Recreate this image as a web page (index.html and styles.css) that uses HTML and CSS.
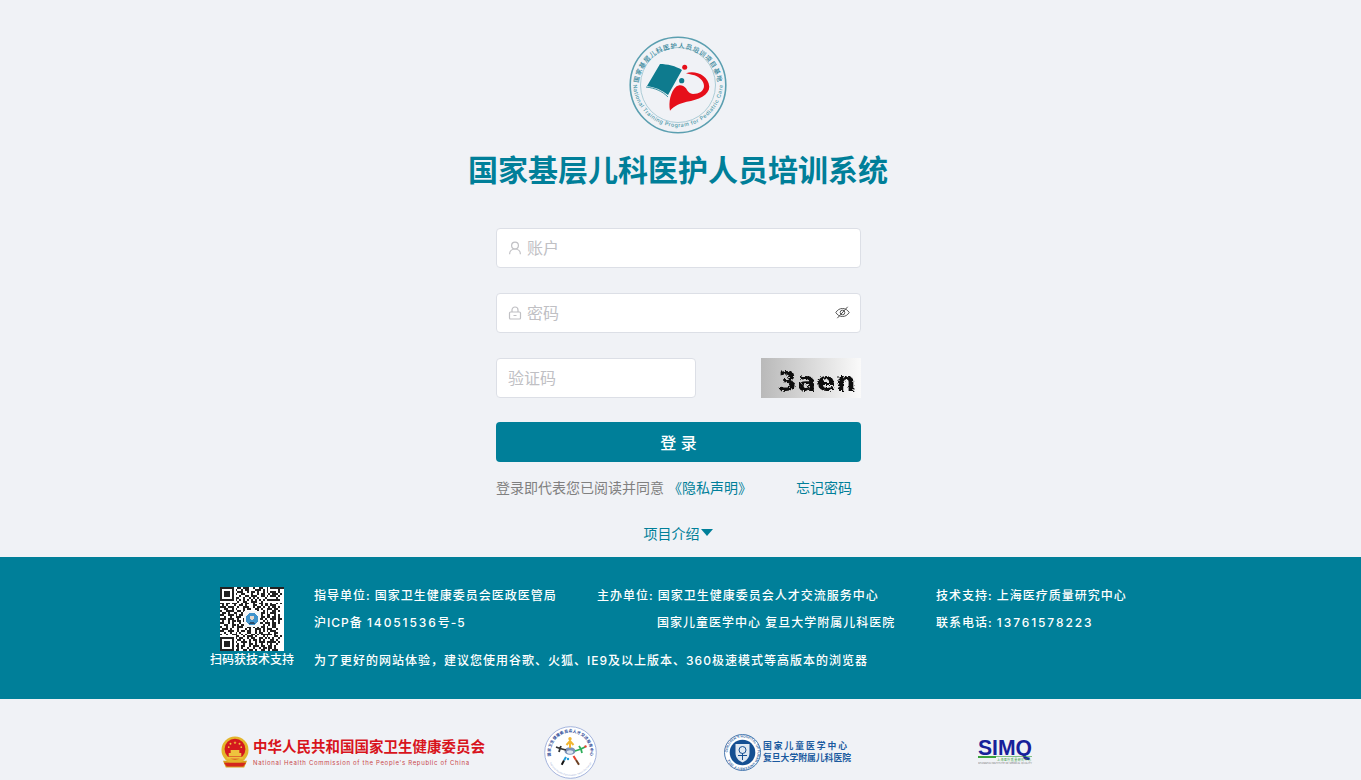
FILE: index.html
```html
<!DOCTYPE html>
<html lang="zh">

<head>
    <meta charset="utf-8">
    <title>国家基层儿科医护人员培训系统</title>
    <link rel="stylesheet" href="styles.css">
</head>

<body>
    <div class="main">
        <svg class="logo" width="98" height="98" viewBox="0 0 98 98">
            <defs>
                <path id="ring-top" d="M9 52A40 40 0 0 1 89 52"></path>
                <path id="ring-bottom" d="M4 46A45 45 0 0 0 94 46"></path>
            </defs>
            <circle cx="49" cy="49" r="47.8" fill="none" stroke="#5b9fb0" stroke-width="1.6"></circle>
            <circle cx="49" cy="49" r="37.5" fill="none" stroke="#8fbcc8" stroke-width="0.7"></circle>
            <text class="ring-cn"><textPath href="#ring-top" startOffset="50%" text-anchor="middle">国家基层儿科医护人员培训项目基地</textPath></text>
            <text class="ring-en"><textPath href="#ring-bottom" startOffset="50%" text-anchor="middle">National Training Program for Pediatric Care</textPath></text>
            <path d="M31 28C38 28 47 30 53 34L39 59C33 54 26 51 18 50Z" fill="#0e7b8e"></path>
            <path d="M17 51C26 52 33 55 39 61" fill="none" stroke="#0e7b8e" stroke-width="0.8"></path>
            <circle cx="55.7" cy="31.3" r="2.5" fill="#e60f1a"></circle>
            <circle cx="52.7" cy="44.7" r="2.6" fill="#0e7b8e"></circle>
            <path d="M57 37.3C66 34 79.3 39 80.3 50.7C80.3 59 69.3 64 57.7 65.7C51 67.3 45 70 41 74.7C39.3 65.7 41.7 55.700 47 50.7C50.3 48 54.3 49 57 52.3C59 56 61 58 64 58C70 58 75 55 75 50C75 45 70 40 63 38.8C61 38.3 59 38 57 37.3Z" fill="#e60f1a"></path>
        </svg>

        <h1 class="title">国家基层儿科医护人员培训系统</h1>

        <form class="login-form">
            <div class="field">
                <svg class="field-icon" width="14" height="14" viewBox="0 0 14 14">
                    <circle cx="7" cy="4.6" r="3.4"></circle>
                    <path d="M1.6 13.2C1.6 10.2 3.8 8 7 8S12.4 10.2 12.4 13.2"></path>
                </svg>
                <input class="field-input has-icon" type="text" placeholder="账户">
            </div>

            <div class="field">
                <svg class="field-icon" width="14" height="14" viewBox="0 0 14 14">
                    <rect x="1.5" y="6" width="11" height="7" rx="1"></rect>
                    <path d="M4 6V4A3 3 0 0 1 10 4V6M5.5 9.5H8.5"></path>
                </svg>
                <input class="field-input has-icon" type="password" placeholder="密码">
                <svg class="eye-icon" width="15" height="15" viewBox="0 0 15 15">
                    <path d="M.8 7.5C2.5 4.8 4.800 3.500 7.500 3.500S12.500 4.800 14.200 7.500C12.500 10.200 10.200 11.500 7.500 11.500S2.500 10.200 .8 7.500Z"></path>
                    <circle cx="7.500" cy="7.500" r="2.300"></circle>
                    <path d="M2.300 13.200L12.700 1.800"></path>
                </svg>
            </div>

            <div class="captcha-row">
                <input class="field-input captcha-input" type="text" placeholder="验证码">
                <svg class="captcha" width="100" height="40" viewBox="0 0 100 40">
                    <defs>
                        <linearGradient id="captcha-bg">
                            <stop offset="0" stop-color="#b9b9b9"></stop>
                            <stop offset="1" stop-color="#fafafa"></stop>
                        </linearGradient>
                        <filter id="captcha-rough" x="-5%" y="-20%" width="110%" height="140%">
                            <feTurbulence type="fractalNoise" baseFrequency="0.6" numOctaves="2" seed="4"></feTurbulence>
                            <feDisplacementMap in="SourceGraphic" scale="4"></feDisplacementMap>
                        </filter>
                    </defs>
                    <rect width="100" height="40" fill="url(#captcha-bg)"></rect>
                    <text class="captcha-text" x="17" y="33" filter="url(#captcha-rough)">3aen</text>
                </svg>
            </div>

            <button class="login-btn" type="button">登 录</button>

            <div class="agree-row">
                <span class="agree-text">登录即代表您已阅读并同意</span>
                <a class="link privacy">《隐私声明》</a>
                <a class="link forgot">忘记密码</a>
            </div>
        </form>

        <a class="link intro">项目介绍<span class="caret"></span></a>
    </div>

    <div class="footer">
        <div class="footer-inner">
            <div class="qr-box">
                <svg class="qr" width="64" height="64" viewBox="0 0 33 33" shape-rendering="crispEdges">
                    <rect width="33" height="33" fill="#fff"></rect>
                    <path fill="none" stroke="#222" d="M0 .5h7m2 0h2m1 0h3m2 0h1m2 0h2m2 0h1m1 0h7M0 1.500h1m5 0h1m1 0h1m2 0h1m1 0h2m3 0h3m1 0h1m1 0h1m5 0h1M0 2.500h1m1 0h3m1 0h1m2 0h3m2 0h1m1 0h2m1 0h1m2 0h1m1 0h1m1 0h3m1 0h1M0 3.500h1m1 0h3m1 0h1m1 0h1m2 0h2m3 0h1m2 0h1m1 0h2m2 0h1m1 0h3m1 0h1M0 4.500h1m1 0h3m1 0h1m3 0h1m2 0h2m1 0h3m2 0h2m1 0h1m1 0h3m1 0h1M0 5.500h1m5 0h1m1 0h2m2 0h1m2 0h1m1 0h1m1 0h1m3 0h1m5 0h1M0 6.500h7m1 0h1m1 0h1m1 0h1m1 0h1m1 0h1m1 0h1m1 0h1m1 0h1m1 0h7M9 7.500h1m2 0h2m2 0h3m2 0h1M0 8.500h2m1 0h2m1 0h3m2 0h1m1 0h2m2 0h1m2 0h2m1 0h2m1 0h1m2 0h1m1 0h1M1 9.500h1m1 0h1m3 0h1m2 0h2m1 0h1m3 0h2m2 0h1m1 0h2m1 0h3M0 10.500h3m1 0h3m2 0h1m2 0h3m2 0h1m1 0h2m1 0h1m2 0h1m1 0h2m1 0h1M2 11.500h2m2 0h1m1 0h1m3 0h1m1 0h2m2 0h2m1 0h1m2 0h3m1 0h2M0 12.500h1m2 0h4m2 0h2m1 0h1m6 0h1m2 0h1m1 0h1m2 0h2m1 0h1M1 13.500h2m1 0h1m2 0h2m2 0h1m1 0h1m7 0h2m1 0h1m1 0h3M0 14.500h2m2 0h3m1 0h1m1 0h2m1 0h1m7 0h1m2 0h2m2 0h1m1 0h1M2 15.500h1m2 0h1m2 0h3m2 0h1m7 0h2m1 0h2m1 0h2m1 0h1M0 16.500h3m1 0h3m2 0h1m2 0h1m1 0h1m5 0h2m1 0h1m2 0h3m1 0h2M1 17.500h1m2 0h1m1 0h2m1 0h2m1 0h2m5 0h1m2 0h1m1 0h1m2 0h1m2 0h1M0 18.500h2m2 0h1m1 0h1m3 0h1m2 0h1m1 0h1m1 0h1m1 0h3m1 0h3m1 0h2m1 0h1M2 19.500h2m2 0h2m1 0h1m1 0h2m1 0h3m2 0h1m2 0h1m2 0h1m1 0h2M0 20.500h1m2 0h1m2 0h1m2 0h3m2 0h2m1 0h1m1 0h1m1 0h2m1 0h1m2 0h2M1 21.500h3m1 0h1m3 0h1m3 0h1m1 0h1m2 0h3m1 0h1m1 0h3m2 0h1M0 22.500h2m2 0h3m2 0h1m1 0h2m1 0h2m2 0h1m1 0h1m1 0h1m1 0h1m1 0h3M2 23.500h1m2 0h1m2 0h1m1 0h1m3 0h2m2 0h1m1 0h2m3 0h1m2 0h2M0 24.500h1m2 0h1m2 0h3m2 0h1m1 0h1m2 0h2m1 0h1m1 0h6m1 0h1M8 25.500h2m2 0h1m1 0h3m1 0h1m3 0h1m1 0h1m3 0h2m1 0h1M0 26.500h7m1 0h1m1 0h2m2 0h1m1 0h2m2 0h2m1 0h1m1 0h1m1 0h1m2 0h1M0 27.500h1m5 0h1m2 0h2m1 0h1m2 0h1m1 0h2m1 0h1m1 0h1m3 0h2m1 0h1M0 28.500h1m1 0h3m1 0h1m1 0h1m2 0h3m1 0h1m2 0h1m1 0h3m1 0h5m1 0h1M0 29.500h1m1 0h3m1 0h1m2 0h1m2 0h1m2 0h2m1 0h1m2 0h1m2 0h1m1 0h1m2 0h1M0 30.500h1m1 0h3m1 0h1m1 0h2m1 0h2m2 0h1m1 0h3m1 0h2m2 0h2m1 0h1M0 31.500h1m5 0h1m2 0h1m1 0h1m2 0h1m2 0h1m2 0h1m1 0h2m1 0h2m1 0h1M0 32.500h7m1 0h2m2 0h2m1 0h2m1 0h1m2 0h2m2 0h1m1 0h3"></path>
                    <rect x="12.500" y="12.500" width="8" height="8" fill="#f4f6f8"></rect>
                    <circle cx="16.500" cy="16.500" r="3.200" fill="#3f93cc"></circle>
                    <circle cx="16.500" cy="15.800" r="1.100" fill="#e6d8cc"></circle>
                    <path d="M15 19C15 17.500 18 17.500 18 19Z" fill="#274c6b"></path>
                </svg>
                <span class="qr-text">扫码获技术支持</span>
            </div>

            <div class="footer-info">
                <div>
                    <p>指导单位: 国家卫生健康委员会医政医管局</p>
                    <p>主办单位: 国家卫生健康委员会人才交流服务中心</p>
                    <p>技术支持: 上海医疗质量研究中心</p>
                </div>
                <div>
                    <p>沪ICP备 <span class="wide">14051536</span>号-5</p>
                    <p class="indent">国家儿童医学中心 复旦大学附属儿科医院</p>
                    <p>联系电话: <span class="wide">13761578223</span></p>
                </div>
                <p class="browser-tip">为了更好的网站体验，建议您使用谷歌、火狐、IE9及以上版本、360极速模式等高版本的浏览器</p>
            </div>
        </div>
    </div>

    <div class="partners">
        <div class="partner partner-nhc">
            <svg width="29" height="33" viewBox="0 0 29 33">
                <path d="M2 25H27L24 32H5Z" fill="#d8a21c"></path>
                <circle cx="14.500" cy="14" r="14" fill="#e3b52b"></circle>
                <circle cx="14.500" cy="13" r="10.800" fill="#d4171e"></circle>
                <path d="M6 21H23V23H6ZM8 17H21V20.500H8ZM10 14H19V17H10Z" fill="#eec33e"></path>
                <path d="M14.500 4.500L15.600 7.800L12.800 5.800H16.200L13.400 7.800Z" fill="#eec33e"></path>
                <circle cx="9.800" cy="7.500" r="1" fill="#eec33e"></circle>
                <circle cx="19.200" cy="7.500" r="1" fill="#eec33e"></circle>
                <circle cx="8" cy="11" r="0.900" fill="#eec33e"></circle>
                <circle cx="21" cy="11" r="0.900" fill="#eec33e"></circle>
                <path d="M3 27H26L23 31H6Z" fill="#d4271d"></path>
            </svg>
            <div class="nhc-text">
                <div class="nhc-cn">中华人民共和国国家卫生健康委员会</div>
                <div class="nhc-en">National Health Commission of the People's Republic of China</div>
            </div>
        </div>

        <svg class="partner partner-star" width="53" height="53" viewBox="0 0 53 53">
            <defs>
                <path id="star-top" d="M7 30.900A20 20 0 1 1 46 30.900"></path>
                <path id="star-bottom" d="M3.500 27A23 23 0 0 0 49.500 27"></path>
            </defs>
            <circle cx="26.500" cy="26.500" r="25.800" fill="#fff" stroke="#8fa3d6" stroke-width="0.8"></circle>
            <text class="star-cn"><textPath href="#star-top" startOffset="50%" text-anchor="middle">国家卫生健康委员会人才交流服务中心</textPath></text>
            <text class="star-en"><textPath href="#star-bottom" startOffset="50%" text-anchor="middle">National Health Commission Talent Exchange</textPath></text>
            <ellipse cx="26" cy="25" rx="5.500" ry="3.800" fill="#7d92b8"></ellipse>
            <ellipse cx="26" cy="26" rx="3.200" ry="1.800" fill="#dfe6f0"></ellipse>
            <path d="M26 22V16.500M22.500 19L26 15L29.500 19" fill="none" stroke="#f2b632" stroke-width="2"></path>
            <circle cx="26" cy="12.700" r="1.700" fill="#f2b632"></circle>
            <path d="M31 25L37 23L41 21M35 20L37 23L38 27" fill="none" stroke="#2fae5a" stroke-width="1.800"></path>
            <path d="M22 24L16 22.500L12 21M17 20L16 22.500L15 26" fill="none" stroke="#333" stroke-width="1.800"></path>
            <path d="M29.500 30L32 34" fill="none" stroke="#e8412c" stroke-width="2"></path>
            <path d="M32 34L35 38.700" fill="none" stroke="#6b3f22" stroke-width="2"></path>
            <path d="M22 31L20 34.500" fill="none" stroke="#1f9ad6" stroke-width="2"></path>
            <path d="M20 34.500L17.700 38.700" fill="none" stroke="#111" stroke-width="2"></path>
            <circle cx="41.500" cy="20.500" r="1.200" fill="#e8412c"></circle>
            <circle cx="24" cy="33" r="1.200" fill="#1f9ad6"></circle>
        </svg>

        <div class="partner partner-center">
            <svg width="37" height="37" viewBox="0 0 37 37">
                <defs>
                    <path id="center-ring" d="M3.500 18.500A15 15 0 1 1 33.500 18.500A15 15 0 1 1 3.500 18.500"></path>
                </defs>
                <circle cx="18.500" cy="18.500" r="18" fill="#fff" stroke="#1f5c9e" stroke-width="0.8"></circle>
                <text class="center-ring-text"><textPath href="#center-ring">CHILDREN'S HOSPITAL OF FUDAN UNIVERSITY 1952</textPath></text>
                <circle cx="18.500" cy="18.500" r="12.800" fill="#144f92"></circle>
                <path d="M11.500 10H25.500V19C25.500 24 22 27 18.500 28.500C15 27 11.500 24 11.500 19Z" fill="#dfe8f2"></path>
                <circle cx="18.500" cy="16" r="3.500" fill="none" stroke="#144f92"></circle>
                <path d="M14 21.500H23M18.500 19V26" stroke="#144f92" fill="none"></path>
            </svg>
            <div class="center-text">
                <div class="center-line1">国家儿童医学中心</div>
                <div>复旦大学附属儿科医院</div>
            </div>
        </div>

        <svg class="partner partner-smq" width="60" height="34" viewBox="0 -3 60 34">
            <text class="smq-name" x="0" y="17" textLength="54" lengthAdjust="spacingAndGlyphs">SIMQ</text>
            <rect x="0" y="18" width="18" height="2" fill="#3aa03c"></rect>
            <rect x="18" y="18" width="36" height="0.6" fill="#3aa03c"></rect>
            <text class="smq-cn" x="19" y="22.500" textLength="34">上海医疗质量研究中心</text>
            <text class="smq-sub" x="0" y="25.500" textLength="54" lengthAdjust="spacingAndGlyphs">SHANGHAI INSTITUTE OF MEDICAL QUALITY</text>
        </svg>
    </div>
</body>

</html>
```

FILE: styles.css
```css
* {
    box-sizing: border-box;
}

body {
    margin: 0;
    background-color: #f0f2f6;
    font-family: Inter, "Noto Sans CJK SC", sans-serif;
}

p {
    margin: 0;
}

.main {
    display: flex;
    flex-direction: column;
    align-items: center;
    height: 557px;
    padding-top: 36px;
    padding-right: 5px;
}

.logo {
    display: block;
}

.ring-cn {
    font-size: 6.4px;
    font-weight: 500;
    fill: #2f8296;
    letter-spacing: 0.8px;
}

.ring-en {
    font-size: 5.400px;
    font-weight: 500;
    fill: #4b97a8;
    letter-spacing: 0.5px;
}

.title {
    margin: 14px 0 0 0;
    font-size: 30px;
    line-height: 44px;
    font-weight: 700;
    color: #007f99;
}

.login-form {
    width: 365px;
    margin-top: 36px;
    margin-left: 1px;
}

.field {
    position: relative;
    margin-bottom: 25px;
}

.field-input {
    display: block;
    width: 100%;
    height: 40px;
    padding: 0 11px;
    border: 1px solid #dcdfe6;
    border-radius: 4px;
    background-color: #fff;
    font-family: inherit;
    font-size: 16px;
    outline: none;
}

.field-input::placeholder {
    color: #c0c0c4;
    opacity: 1;
}

.has-icon {
    padding-left: 30px;
}

.field-icon {
    position: absolute;
    left: 12px;
    top: 13px;
    fill: none;
    stroke: #c0c0c4;
    stroke-width: 1.2;
}

.eye-icon {
    position: absolute;
    right: 11px;
    top: 12px;
    fill: none;
    stroke: #555;
    stroke-width: 1;
}

.captcha-row {
    display: flex;
    justify-content: space-between;
    margin-bottom: 24px;
}

.captcha-input {
    width: 200px;
}

.captcha {
    display: block;
}

.captcha-text {
    font-family: "DejaVu Sans", sans-serif;
    font-size: 27px;
    font-weight: 700;
    letter-spacing: 1px;
    fill: #111;
}

.login-btn {
    display: block;
    width: 100%;
    height: 40px;
    border: 0;
    border-radius: 4px;
    background-color: #007f99;
    color: #fff;
    font-family: inherit;
    font-size: 16px;
    font-weight: 500;
}

.agree-row {
    display: flex;
    align-items: center;
    height: 20px;
    margin-top: 15px;
    font-size: 14px;
}

.agree-text {
    color: #808080;
}

.link {
    color: #007f99;
    font-size: 14px;
}

.privacy {
    margin-left: 4px;
}

.forgot {
    margin-left: 44px;
}

.intro {
    display: flex;
    align-items: center;
    height: 20px;
    margin-top: 26px;
}

.caret {
    width: 0;
    height: 0;
    margin-left: 1px;
    margin-top: -2px;
    border-top: 7px solid #007f99;
    border-left: 6px solid transparent;
    border-right: 6px solid transparent;
}

.footer {
    height: 142px;
    background-color: #007f99;
    color: #fff;
    font-size: 12px;
    font-weight: 500;
    letter-spacing: 1px;
}

.footer-inner {
    display: flex;
    width: 941px;
    margin: 0 auto;
    padding-top: 30px;
}

.qr-box {
    display: flex;
    flex-direction: column;
    align-items: center;
    width: 84px;
    letter-spacing: 0;
}

.qr {
    display: block;
}

.qr-text {
    line-height: 18px;
    white-space: nowrap;
}

.footer-info {
    margin-left: 20px;
}

.footer-info > div {
    display: grid;
    grid-template-columns: 283px 339px auto;
    height: 27px;
    line-height: 17px;
    white-space: nowrap;
}

.wide {
    letter-spacing: 1.9px;
}

.indent {
    padding-left: 60px;
}

.browser-tip {
    margin-top: 11px;
    line-height: 17px;
}

.partners {
    display: flex;
    align-items: center;
    height: 81px;
    padding-top: 25px;
    padding-left: 221px;
}

.partner-nhc {
    display: flex;
    align-items: center;
    width: 264px;
}

.nhc-text {
    margin-left: 4px;
    white-space: nowrap;
}

.nhc-cn {
    font-size: 14.500px;
    line-height: 20px;
    font-weight: 700;
    color: #d8141c;
}

.nhc-en {
    font-size: 6px;
    line-height: 11px;
    letter-spacing: 0.68px;
    color: #c8464a;
}

.partner-star {
    margin-left: 59px;
}

.star-cn {
    font-size: 3.900px;
    font-weight: 700;
    fill: #2f4c98;
    letter-spacing: 0.2px;
}

.star-en {
    font-size: 2.400px;
    fill: #a9b6da;
}

.partner-center {
    display: flex;
    align-items: center;
    margin-left: 127px;
    color: #1a5a9f;
    font-size: 8.800px;
    line-height: 12px;
    font-weight: 700;
}

.center-ring-text {
    font-size: 3.400px;
    font-weight: 600;
    fill: #1f5c9e;
}

.center-text {
    margin-left: 2px;
    white-space: nowrap;
}

.center-line1 {
    letter-spacing: 1.950px;
}

.partner-smq {
    margin-left: 127px;
}

.smq-name {
    font-family: "Liberation Sans", sans-serif;
    font-size: 22px;
    font-weight: 700;
    fill: #17219a;
}

.smq-cn {
    font-size: 3px;
    fill: #3aa03c;
}

.smq-sub {
    font-size: 2.200px;
    fill: #777;
}
```
